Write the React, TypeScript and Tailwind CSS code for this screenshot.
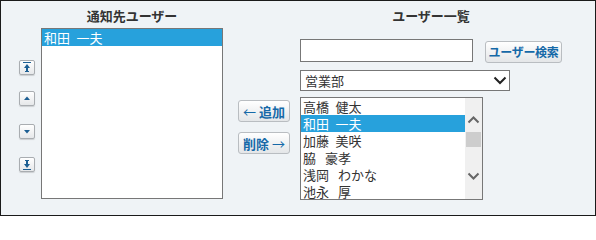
import React from 'react'

const font = { fontFamily: '"Noto Sans CJK JP", "Noto Sans", sans-serif' }

const users = ['高橋\u2002健太', '和田\u2002一夫', '加藤\u2002美咲', '脇\u2002\u2009豪孝', '浅岡\u2002\u2009わかな', '池永\u2002\u2009厚']

function MoveButton({ kind, className = '' }: { kind: 'top' | 'up' | 'down' | 'bottom'; className?: string }) {
  return (
    <button
      className={`block w-[16px] h-[15px] border border-[#a9adb1] rounded-[2px] bg-gradient-to-b from-white to-[#e6e8ea] shadow-[0_1px_1px_rgba(0,0,0,0.15)] p-0 ${className}`}
    >
      <svg className="block" width="14" height="13" viewBox="0 0 14 13" fill="#1d5f93">
        {kind === 'top' && (
          <>
            <rect x="3" y="1" width="8" height="1" />
            <path d="M7 3 L10 7 L4 7 Z" />
            <rect x="6" y="7" width="2" height="3" />
            <rect x="5" y="10" width="4" height="1" />
          </>
        )}
        {kind === 'up' && <path d="M7 4.5 L10 8 L4 8 Z" />}
        {kind === 'down' && <path d="M4 5 L10 5 L7 8.5 Z" />}
        {kind === 'bottom' && (
          <>
            <rect x="5" y="2" width="4" height="1" />
            <rect x="6" y="3" width="2" height="3" />
            <path d="M4 6 L10 6 L7 10 Z" />
            <rect x="3" y="11" width="8" height="1" />
          </>
        )}
      </svg>
    </button>
  )
}

function ActionButton({ children, className = '' }: { children: React.ReactNode; className?: string }) {
  return (
    <button
      className={`h-[22px] border border-[#b9bdc1] rounded-[3px] bg-gradient-to-b from-white to-[#e4e6e8] text-[#1569a8] font-bold leading-none whitespace-nowrap flex items-center justify-center p-0 ${className}`}
    >
      {children}
    </button>
  )
}

export default function App() {
  return (
    <div
      className="w-[596px] h-[216px] border border-[#1a1a1a] bg-[#eff3f6] flex text-[13px] text-[#333] overflow-hidden"
      style={font}
    >
      {/* 並び替え */}
      <div className="ml-[18px] w-[16px] flex flex-col">
        <MoveButton kind="top" className="mt-[59px]" />
        <MoveButton kind="up" className="mt-[16px]" />
        <MoveButton kind="down" className="mt-[18px]" />
        <MoveButton kind="bottom" className="mt-[18px]" />
      </div>

      {/* 通知先ユーザー */}
      <div className="ml-[6px] w-[182px] flex flex-col">
        <div className="h-[27px] pt-[7px] text-center font-bold leading-[16px]">通知先ユーザー</div>
        <div className="h-[171px] border border-[#777] bg-white">
          <div className="h-[17px] leading-[17px] pl-[2px] bg-[#27a1dc] text-white whitespace-pre">{'和田\u2002一夫'}</div>
        </div>
      </div>

      {/* 追加・削除 */}
      <div className="ml-[15px] w-[52px] pt-[99px] flex flex-col gap-[10px]">
        <ActionButton className="w-[52px] text-[13px]">
          <span className="font-normal mr-[3px]">←</span>追加
        </ActionButton>
        <ActionButton className="w-[52px] text-[13px]">
          削除<span className="font-normal ml-[3px]">→</span>
        </ActionButton>
      </div>

      {/* ユーザー一覧 */}
      <div className="ml-[10px] w-[262px] flex flex-col">
        <div className="h-[38px] pt-[7px] text-center font-bold leading-[16px]">ユーザー一覧</div>
        <div className="flex items-start">
          <div className="w-[173px] h-[23px] border border-[#777] bg-white" />
          <ActionButton className="ml-[12px] mt-[2px] w-[77px] text-[12px] tracking-[-0.3px]">ユーザー検索</ActionButton>
        </div>
        <div className="mt-[7px] w-[210px] h-[21px] border border-[#777] bg-white flex items-center pl-[4px] pr-[2px]">
          <span className="flex-1 leading-none">営業部</span>
          <svg className="block" width="14" height="9" viewBox="0 0 14 9" fill="none" stroke="#222" strokeWidth="2">
            <path d="M1.5 1.5 L7 7 L12.5 1.5" />
          </svg>
        </div>
        <div className="mt-[6px] w-[183px] h-[103px] border border-[#777] bg-white flex">
          <div className="flex-1 flex flex-col">
            {users.map((u, i) => (
              <div
                key={u}
                className={`h-[17px] leading-[17px] pl-[2px] whitespace-pre ${i === 1 ? 'bg-[#27a1dc] text-white' : ''}`}
              >
                {u}
              </div>
            ))}
          </div>
          <div className="w-[17px] bg-[#f0f0f0] flex flex-col items-center">
            <svg className="block mt-[18px]" width="13" height="8" viewBox="0 0 13 8" fill="none" stroke="#666" strokeWidth="2">
              <path d="M1.5 6.5 L6.5 1.5 L11.5 6.5" />
            </svg>
            <div className="mt-[8px] w-[15px] h-[15px] bg-[#cdcdcd]" />
            <svg className="block mt-[25px]" width="13" height="8" viewBox="0 0 13 8" fill="none" stroke="#666" strokeWidth="2">
              <path d="M1.5 1.5 L6.5 6.5 L11.5 1.5" />
            </svg>
          </div>
        </div>
      </div>
    </div>
  )
}
